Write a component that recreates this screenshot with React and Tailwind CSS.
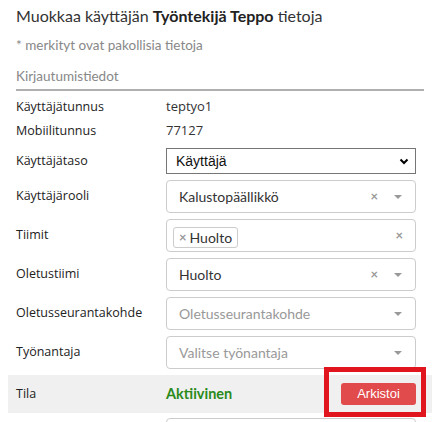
const Caret = () => (
  <svg width="10" height="6" viewBox="0 0 10 6" className="text-[#999]">
    <path d="M1 1h8L5 5z" fill="currentColor" />
  </svg>
);

const Clear = ({ className = '' }) => (
  <span className={`text-[13px] font-bold leading-none text-[#999] ${className}`}>×</span>
);

const Label = ({ children }) => (
  <div className="w-[150px] shrink-0 text-[12.5px] text-[#222] font-['Open_Sans',sans-serif]">{children}</div>
);

const ReactSelect = ({ value, placeholder, clear = true, caret = true }) => (
  <div className="flex h-[33px] w-[250px] items-center rounded border border-[#ccc] bg-white pl-[12px] pr-[12px]">
    <div className={`flex-1 text-[14px] ${value ? 'text-[#333]' : 'text-[#999]'}`}>{value || placeholder}</div>
    {clear && <Clear className={caret ? 'mr-[15px]' : ''} />}
    {caret && <Caret />}
  </div>
);

const App = () => {
  return (
    <div className="relative h-[422px] w-[432px] overflow-hidden bg-white font-['Lato',sans-serif]">
      <div className="px-4 pt-[4px]">
        <h1 className="text-[16px] leading-[24px] text-[#333]">
          Muokkaa käyttäjän <b className="font-bold text-[#222]">Työntekijä Teppo</b> tietoja
        </h1>
        <p className="mt-[8px] text-[13.5px] leading-[18px] text-[#888]">* merkityt ovat pakollisia tietoja</p>
        <p className="mt-[13px] text-[13.5px] leading-[18px] text-[#888]">Kirjautumistiedot</p>
        <div className="mt-[4px] h-[2px] w-[408px] bg-[#b0b0b0]" />
      </div>

      <div className="pl-4">
        <div className="mt-[4px] flex h-[24px] items-center">
          <Label>Käyttäjätunnus</Label>
          <span className="text-[13px] text-[#333] font-['Open_Sans',sans-serif]">teptyo1</span>
        </div>
        <div className="flex h-[24px] items-center">
          <Label>Mobiilitunnus</Label>
          <span className="text-[13px] text-[#333] font-['Open_Sans',sans-serif]">77127</span>
        </div>

        <div className="mt-[5px] flex items-center">
          <Label>Käyttäjätaso</Label>
          <div className="flex h-[26px] w-[250px] items-center border border-[#767676] pl-[9px] pr-[6px] font-['Liberation_Sans',sans-serif] text-[14px] font-normal text-[#111]">
            <span className="flex-1">Käyttäjä</span>
            <svg width="10" height="7" viewBox="0 0 10 7">
              <path d="M1.5 1.5L5 5l3.5-3.5" stroke="black" strokeWidth="2" fill="none" />
            </svg>
          </div>
        </div>

        <div className="mt-[6px] flex flex-col gap-[6px]">
          <div className="flex items-center">
            <Label>Käyttäjärooli</Label>
            <ReactSelect value="Kalustopäällikkö" />
          </div>
          <div className="flex items-center">
            <Label>Tiimit</Label>
            <div className="flex h-[33px] w-[250px] items-center rounded border border-[#ccc] bg-white pl-[6px] pr-[12px]">
              <div className="flex-1">
                <span className="inline-flex h-[21px] items-center gap-[3px] rounded-[3px] border border-[#ccc] px-[5px] text-[14px] text-[#333]">
                  <Clear className="text-[11px]" />
                  Huolto
                </span>
              </div>
              <Clear />
            </div>
          </div>
          <div className="flex items-center">
            <Label>Oletustiimi</Label>
            <ReactSelect value="Huolto" />
          </div>
          <div className="flex items-center">
            <Label>Oletusseurantakohde</Label>
            <ReactSelect placeholder="Oletusseurantakohde" clear={false} />
          </div>
          <div className="flex items-center">
            <Label>Työnantaja</Label>
            <ReactSelect placeholder="Valitse työnantaja" clear={false} />
          </div>
        </div>
      </div>

      <div className="ml-2 mt-[6px] flex h-[38px] items-center bg-[#f0f0f0] pl-2">
        <Label>Tila</Label>
        <span className="w-[175px] text-[14.5px] font-bold text-[#2a8a1a]">Aktiivinen</span>
        <button className="flex h-[22px] w-[75px] items-center justify-center rounded-[3px] bg-[#e24b4b] font-['Liberation_Sans',sans-serif] text-[13px] text-white">
          Arkistoi
        </button>
      </div>

      <div className="ml-[166px] mt-[5px] h-[33px] w-[250px] rounded border border-[#ccc]" />

      <div className="absolute left-[324px] top-[367px] h-[50px] w-[102px] border-[5px] border-[#e0151d]" />
    </div>
  );
};

export default App;
